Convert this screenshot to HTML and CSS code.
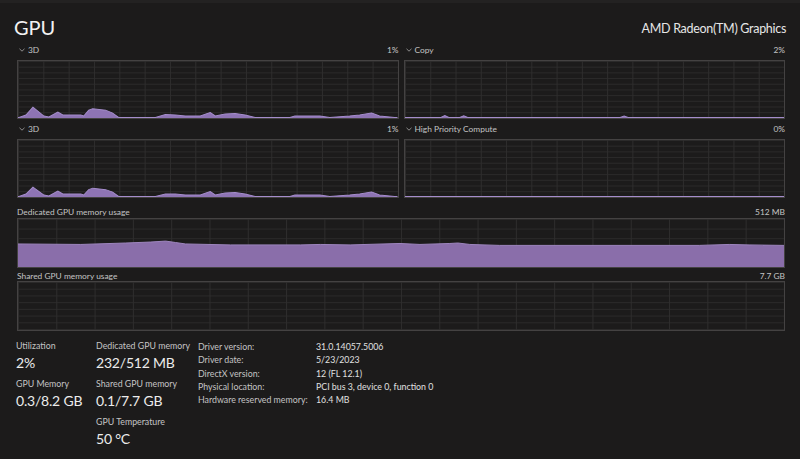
FILE: index.html
```html
<!DOCTYPE html>
<html lang="en">
<head>
<meta charset="utf-8">
<title>GPU</title>
<link rel="stylesheet" href="styles.css">
</head>
<body>
<div class="app">
  <header class="head">
    <h1 class="title">GPU</h1>
    <div class="model">AMD Radeon(TM) Graphics</div>
  </header>

  <section class="engines">
    <div class="engine">
      <div class="lbl"><svg class="chev" viewBox="0 0 6 4"><polyline points="0.5,0.8 3,3.2 5.5,0.8"/></svg><span class="name">3D</span><span class="val">1%</span></div>
      <div class="chart chart-eng">
        <svg viewBox="0 0 381 58" preserveAspectRatio="none">
          <path class="area" d="M0,58 L1,57.5 L8,55 L15,47 L26,56 L31,57 L40,52 L45,55 L63,55 L66,56 L71,50 L75,48.5 L88,50 L95,53 L101,57.5 L138,57.5 L148,54.5 L158,55 L168,56 L183,56 L193,52.5 L198,56 L208,54 L218,53.5 L228,55 L238,57.5 L273,57.5 L278,56 L303,56 L313,57.5 L333,56 L343,55 L355,53 L363,56 L378,57.5 L381,58 Z"/>
          <polyline class="line" points="0,57.5 1,57.5 8,55 15,47 26,56 31,57 40,52 45,55 63,55 66,56 71,50 75,48.5 88,50 95,53 101,57.5 138,57.5 148,54.5 158,55 168,56 183,56 193,52.5 198,56 208,54 218,53.5 228,55 238,57.5 273,57.5 278,56 303,56 313,57.5 333,56 343,55 355,53 363,56 378,57.5 381,57.5"/>
        </svg>
      </div>
    </div>
    <div class="engine">
      <div class="lbl"><svg class="chev" viewBox="0 0 6 4"><polyline points="0.5,0.8 3,3.2 5.5,0.8"/></svg><span class="name">Copy</span><span class="val">2%</span></div>
      <div class="chart chart-eng">
        <svg viewBox="0 0 381 58" preserveAspectRatio="none">
          <path class="area" d="M0,58 L0,57.5 L36,57.5 L40,55.5 L44,57.5 L55,57.5 L59,55.8 L63,57.5 L216,57.5 L220,56 L224,57.5 L381,57.5 L381,58 Z"/>
          <polyline class="line" points="0,57.5 36,57.5 40,55.5 44,57.5 55,57.5 59,55.8 63,57.5 216,57.5 220,56 224,57.5 381,57.5"/>
        </svg>
      </div>
    </div>
    <div class="engine">
      <div class="lbl"><svg class="chev" viewBox="0 0 6 4"><polyline points="0.5,0.8 3,3.2 5.5,0.8"/></svg><span class="name">3D</span><span class="val">1%</span></div>
      <div class="chart chart-eng">
        <svg viewBox="0 0 381 58" preserveAspectRatio="none">
          <path class="area" d="M0,58 L1,57.5 L8,55 L15,48 L26,56 L31,57 L40,52 L45,55 L63,55 L66,56 L71,50.5 L75,49 L88,50.5 L95,53 L101,57.5 L138,57.5 L148,55 L158,55 L168,56 L183,56 L193,52.5 L198,56 L208,54 L218,53.5 L228,55 L238,57.5 L273,57.5 L278,56 L303,56 L313,57.5 L333,56 L343,55 L355,53 L363,56 L378,57.5 L381,58 Z"/>
          <polyline class="line" points="0,57.5 1,57.5 8,55 15,48 26,56 31,57 40,52 45,55 63,55 66,56 71,50.5 75,49 88,50.5 95,53 101,57.5 138,57.5 148,55 158,55 168,56 183,56 193,52.5 198,56 208,54 218,53.5 228,55 238,57.5 273,57.5 278,56 303,56 313,57.5 333,56 343,55 355,53 363,56 378,57.5 381,57.5"/>
        </svg>
      </div>
    </div>
    <div class="engine">
      <div class="lbl"><svg class="chev" viewBox="0 0 6 4"><polyline points="0.5,0.8 3,3.2 5.5,0.8"/></svg><span class="name">High Priority Compute</span><span class="val">0%</span></div>
      <div class="chart chart-eng">
        <svg viewBox="0 0 381 58" preserveAspectRatio="none">
          <polyline class="line" points="0,57.5 381,57.5"/>
        </svg>
      </div>
    </div>
  </section>

  <section class="mem">
    <div class="lbl mem-lbl"><span class="name">Dedicated GPU memory usage</span><span class="val">512 MB</span></div>
    <div class="chart chart-ded">
      <svg viewBox="0 0 768 50" preserveAspectRatio="none">
        <path class="area mem-area" d="M0,50 L0,26 L63,26.5 L108,25 L133,24 L148,23 L158,24.5 L168,26 L213,27 L283,27 L303,26.5 L333,27 L383,25.5 L403,26.5 L433,25.5 L441,25 L453,26.5 L483,27.5 L683,27.5 L713,26.5 L733,27 L768,27.5 L768,50 Z"/>
        <polyline class="line mem-line" points="0,26 63,26.5 108,25 133,24 148,23 158,24.5 168,26 213,27 283,27 303,26.5 333,27 383,25.5 403,26.5 433,25.5 441,25 453,26.5 483,27.5 683,27.5 713,26.5 733,27 768,27.5"/>
      </svg>
    </div>
    <div class="lbl mem-lbl2"><span class="name">Shared GPU memory usage</span><span class="val">7.7 GB</span></div>
    <div class="chart chart-sha"></div>
  </section>

  <section class="stats">
    <div class="col col1">
      <div class="stat"><div class="s-lbl">Utilization</div><div class="s-val">2%</div></div>
      <div class="stat"><div class="s-lbl">GPU Memory</div><div class="s-val">0.3/8.2 GB</div></div>
    </div>
    <div class="col col2">
      <div class="stat"><div class="s-lbl">Dedicated GPU memory</div><div class="s-val">232/512 MB</div></div>
      <div class="stat"><div class="s-lbl">Shared GPU memory</div><div class="s-val">0.1/7.7 GB</div></div>
      <div class="stat"><div class="s-lbl">GPU Temperature</div><div class="s-val">50 °C</div></div>
    </div>
    <dl class="info">
      <dt>Driver version:</dt><dd>31.0.14057.5006</dd>
      <dt>Driver date:</dt><dd>5/23/2023</dd>
      <dt>DirectX version:</dt><dd>12 (FL 12.1)</dd>
      <dt>Physical location:</dt><dd>PCI bus 3, device 0, function 0</dd>
      <dt>Hardware reserved memory:</dt><dd>16.4 MB</dd>
    </dl>
  </section>
</div>
</body>
</html>
```

FILE: styles.css
```css
* { box-sizing: border-box; }
html, body {
  margin: 0;
  padding: 0;
  background: #1c1b1b;
}
body {
  font-family: "Segoe UI", Lato, "Open Sans", sans-serif;
  color: #d6d6d6;
  width: 800px;
  height: 459px;
  overflow: hidden;
}
.app {
  border-top: 3px solid #232222;
  padding: 0 15px 0 17px;
}
.head {
  height: 37px;
  display: flex;
  justify-content: space-between;
  align-items: flex-end;
  padding-bottom: 2px;
}
.title {
  margin: 0 0 0 -3px;
  font-size: 20px;
  font-weight: 400;
  line-height: 22px;
  color: #f2f2f2;
}
.model {
  font-size: 12.5px;
  letter-spacing: -0.3px;
  line-height: 16px;
  color: #e6e6e6;
  margin-right: -1px;
  margin-bottom: 1px;
}
.engines {
  display: grid;
  grid-template-columns: 1fr 1fr;
  column-gap: 5px;
}
.lbl {
  display: flex;
  align-items: center;
  height: 20px;
  font-size: 8.4px;
  color: #c4c4c4;
}
.lbl .val { margin-left: auto; }
.chev {
  width: 6px;
  height: 4px;
  margin: 0 3px 0 2px;
  fill: none;
  stroke: #9a9a9a;
  stroke-width: 0.9;
}
.chart {
  border: 1px solid #444242;
  background-color: #1c1b1b;
  background-image:
    linear-gradient(to right, #2e2d2d 1px, transparent 1px),
    linear-gradient(to bottom, #2b2a2a 1px, transparent 1px);
  background-size: calc(100% / 15) 100%, 100% 10%;
}
.chart svg {
  display: block;
  width: 100%;
  height: 100%;
}
.chart-eng { height: 59px; }
.area { fill: #8e74b4; }
.line {
  fill: none;
  stroke: #a48ccb;
  stroke-width: 1;
  vector-effect: non-scaling-stroke;
}
.mem-lbl { height: 20px; padding-top: 7px; }
.mem-lbl2 { height: 13px; padding-top: 2px; }
.chart-ded {
  height: 50px;
  background-size: calc(100% / 20) 100%, 100% 20%;
}
.chart-sha {
  height: 50px;
  background-size: calc(100% / 20) 100%, 100% 14%;
}
.mem-area { fill: #8a6eaa; }
.mem-line { stroke: #9d85bd; }
.stats {
  display: flex;
  padding-top: 8px;
  margin-left: -1px;
}
.col1 { width: 80px; }
.col2 { width: 102px; }
.stat { height: 38px; }
.s-lbl {
  font-size: 8.8px;
  line-height: 14px;
  color: #c4c4c4;
  white-space: nowrap;
}
.s-val {
  font-size: 14px;
  letter-spacing: -0.2px;
  line-height: 20px;
  color: #ececec;
  white-space: nowrap;
}
.info {
  margin: 0;
  display: grid;
  grid-template-columns: 118px auto;
  grid-auto-rows: 13.25px;
  font-size: 8.8px;
  line-height: 13.25px;
  padding-top: 1px;
}
.info dt { color: #c4c4c4; }
.info dd { margin: 0; color: #e0e0e0; }
```
